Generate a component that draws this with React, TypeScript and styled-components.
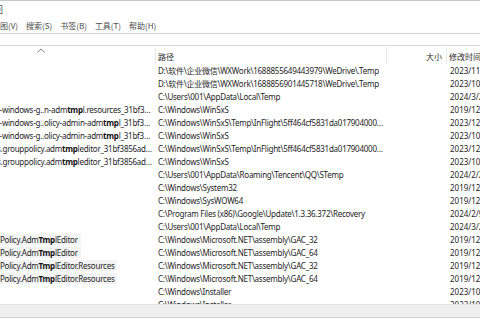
import React from 'react';
import styled, { createGlobalStyle } from 'styled-components';

const GlobalStyle = createGlobalStyle`
  html, body {
    margin: 0;
    padding: 0;
    background: #ffffff;
  }
  body {
    font-family: 'Noto Sans', 'Noto Sans CJK SC', sans-serif;
    color: #1e1e1e;
  }
`;

const Window = styled.div`
  width: 480px;
  height: 320px;
  display: flex;
  flex-direction: column;
  overflow: hidden;
  background: #ffffff;
  border-top: 1px solid #c9c9c9;
  box-sizing: border-box;
`;

const TitleStrip = styled.div`
  height: 16px;
  display: flex;
  align-items: center;
  overflow: hidden;
  font-size: 9px;
  color: #555;
`;

const TitleGlyph = styled.span`
  margin-left: -6px;
  font-family: 'Noto Sans CJK SC', sans-serif;
`;

const MenuBar = styled.div`
  height: 16px;
  display: flex;
  align-items: center;
  gap: 8px;
  margin-left: -8px;
  border-bottom: 1px solid #cfcfcf;
  font-size: 8px;
  color: #4a4a4a;
  white-space: nowrap;
`;

const MenuItem = styled.span`
  font-family: 'Noto Sans CJK SC', sans-serif;
`;

const SearchBox = styled.div`
  height: 11px;
  border-bottom: 1px solid #dadada;
`;

const Columns = styled.div`
  display: grid;
  grid-template-columns: 156px 231px 60px 1fr;
`;

const Header = styled(Columns)`
  height: 17px;
  margin-top: 1px;
  font-size: 8px;
  color: #2e2e2e;
`;

const HeadCell = styled.div<{ $align?: 'left' | 'right'; $sep?: boolean }>`
  position: relative;
  display: flex;
  align-items: flex-end;
  justify-content: ${p => (p.$align === 'right' ? 'flex-end' : 'flex-start')};
  padding: 0 4px 2px 2px;
  border-right: ${p => (p.$sep ? '1px solid #e8e8e8' : 'none')};
  font-family: 'Noto Sans CJK SC', sans-serif;
  white-space: nowrap;
  overflow: hidden;
`;

const SortCaret = styled.svg`
  position: absolute;
  left: 37px;
  top: 1px;
`;

const List = styled.div`
  flex: 1;
  overflow: hidden;
`;

const Row = styled(Columns)`
  height: 13px;
  align-items: center;
  font-size: 8px;
  line-height: 13px;
  letter-spacing: -0.25px;
  white-space: nowrap;
`;

const NameCell = styled.div`
  overflow: hidden;
  min-width: 0;
`;

/* the name column is scrolled to the right: the start of each name is hidden */
const NameText = styled.div<{ $shift: number }>`
  width: ${p => 154 + p.$shift}px;
  margin-left: ${p => -p.$shift}px;
  overflow: hidden;
  text-overflow: ellipsis;
`;

const Shade = styled.span`
  background: #f3f3f3;
  padding-right: 3px;
`;

const Hit = styled.b`
  font-weight: 700;
  color: #111;
`;

const PathCell = styled.div`
  overflow: hidden;
  text-overflow: ellipsis;
  min-width: 0;
  padding: 0 1px 0 2px;
`;

const SizeCell = styled.div`
  text-align: right;
  padding-right: 4px;
`;

const DateCell = styled.div`
  overflow: hidden;
  padding-left: 3px;
  letter-spacing: 0;
`;

const StatusBar = styled.div`
  height: 12px;
  background: #efefef;
  border-top: 1px solid #e3e3e3;
  border-bottom: 1px solid #cdcdcd;
  margin-bottom: 2px;
`;

type Name = { pre: string; hit: string; post: string; shift: number; shade?: boolean };
type Entry = { name?: Name; path: string; date: string };

const inflight = 'C:\\Windows\\WinSxS\\Temp\\InFlight\\5ff464cf5831da0179040000b80a0c0c\\amd64';

const rows: Entry[] = [
  { path: 'D:\\软件\\企业微信\\WXWork\\1688855649443979\\WeDrive\\.Temp', date: '2023/11/21 10:12' },
  { path: 'D:\\软件\\企业微信\\WXWork\\1688856901445718\\WeDrive\\.Temp', date: '2023/10/30 16:05' },
  { path: 'C:\\Users\\001\\AppData\\Local\\Temp', date: '2024/3/2 11:40' },
  {
    name: { pre: 'c-windows-g..n-adm', hit: 'tmp', post: 'l.resources_31bf3856ad364e35_10.0', shift: 4 },
    path: 'C:\\Windows\\WinSxS',
    date: '2019/12/7 17:10',
  },
  {
    name: { pre: 'c-windows-g..olicy-admin-adm', hit: 'tmp', post: 'l_31bf3856ad364e35_10.0', shift: 4 },
    path: inflight,
    date: '2023/12/14 9:02',
  },
  {
    name: { pre: 'c-windows-g..olicy-admin-adm', hit: 'tmp', post: 'l_31bf3856ad364e35_10.0', shift: 4 },
    path: 'C:\\Windows\\WinSxS',
    date: '2023/10/11 8:57',
  },
  {
    name: { pre: 's.grouppolicy.adm', hit: 'tmp', post: 'leditor_31bf3856ad364e35_10.0', shift: 3 },
    path: inflight,
    date: '2023/12/14 9:02',
  },
  {
    name: { pre: 's.grouppolicy.adm', hit: 'tmp', post: 'leditor_31bf3856ad364e35_10.0', shift: 3 },
    path: 'C:\\Windows\\WinSxS',
    date: '2023/10/11 8:57',
  },
  { path: 'C:\\Users\\001\\AppData\\Roaming\\Tencent\\QQ\\STemp', date: '2024/2/26 20:31' },
  { path: 'C:\\Windows\\System32', date: '2019/12/7 17:08' },
  { path: 'C:\\Windows\\SysWOW64', date: '2019/12/7 17:08' },
  { path: 'C:\\Program Files (x86)\\Google\\Update\\1.3.36.372\\Recovery', date: '2024/2/9 13:15' },
  { path: 'C:\\Users\\001\\AppData\\Local\\Temp', date: '2024/3/2 11:40' },
  {
    name: { pre: 'Policy.Adm', hit: 'Tmp', post: 'lEditor', shift: 0, shade: true },
    path: 'C:\\Windows\\Microsoft.NET\\assembly\\GAC_32',
    date: '2019/12/7 17:10',
  },
  {
    name: { pre: 'Policy.Adm', hit: 'Tmp', post: 'lEditor', shift: 0, shade: true },
    path: 'C:\\Windows\\Microsoft.NET\\assembly\\GAC_64',
    date: '2019/12/7 17:10',
  },
  {
    name: { pre: 'Policy.Adm', hit: 'Tmp', post: 'lEditor.Resources', shift: 0, shade: true },
    path: 'C:\\Windows\\Microsoft.NET\\assembly\\GAC_32',
    date: '2019/12/7 17:10',
  },
  {
    name: { pre: 'Policy.Adm', hit: 'Tmp', post: 'lEditor.Resources', shift: 0, shade: true },
    path: 'C:\\Windows\\Microsoft.NET\\assembly\\GAC_64',
    date: '2019/12/7 17:10',
  },
  { path: 'C:\\Windows\\Installer', date: '2023/10/11 9:20' },
  { path: 'C:\\Windows\\Installer', date: '2023/10/11 9:20' },
];

const menus = ['视图(V)', '搜索(S)', '书签(B)', '工具(T)', '帮助(H)'];

const NameContent = ({ name }: { name: Name }) => {
  const inner = (
    <>
      {name.pre}
      <Hit>{name.hit}</Hit>
      {name.post}
    </>
  );
  return <NameText $shift={name.shift}>{name.shade ? <Shade>{inner}</Shade> : inner}</NameText>;
};

const App = () => (
  <>
    <GlobalStyle />
    <Window>
      <TitleStrip>
        <TitleGlyph>回</TitleGlyph>
      </TitleStrip>
      <MenuBar>
        {menus.map(m => (
          <MenuItem key={m}>{m}</MenuItem>
        ))}
      </MenuBar>
      <SearchBox />
      <Header>
        <HeadCell $sep>
          <SortCaret width="8" height="5" viewBox="0 0 8 5">
            <polyline points="0.5,4.5 4,1 7.5,4.5" fill="none" stroke="#8a8a8a" strokeWidth="1" />
          </SortCaret>
        </HeadCell>
        <HeadCell $sep>路径</HeadCell>
        <HeadCell $sep $align="right">大小</HeadCell>
        <HeadCell>修改时间</HeadCell>
      </Header>
      <List>
        {rows.map((r, i) => (
          <Row key={i}>
            <NameCell>{r.name && <NameContent name={r.name} />}</NameCell>
            <PathCell>{r.path}</PathCell>
            <SizeCell />
            <DateCell>{r.date}</DateCell>
          </Row>
        ))}
      </List>
      <StatusBar />
    </Window>
  </>
);

export default App;
